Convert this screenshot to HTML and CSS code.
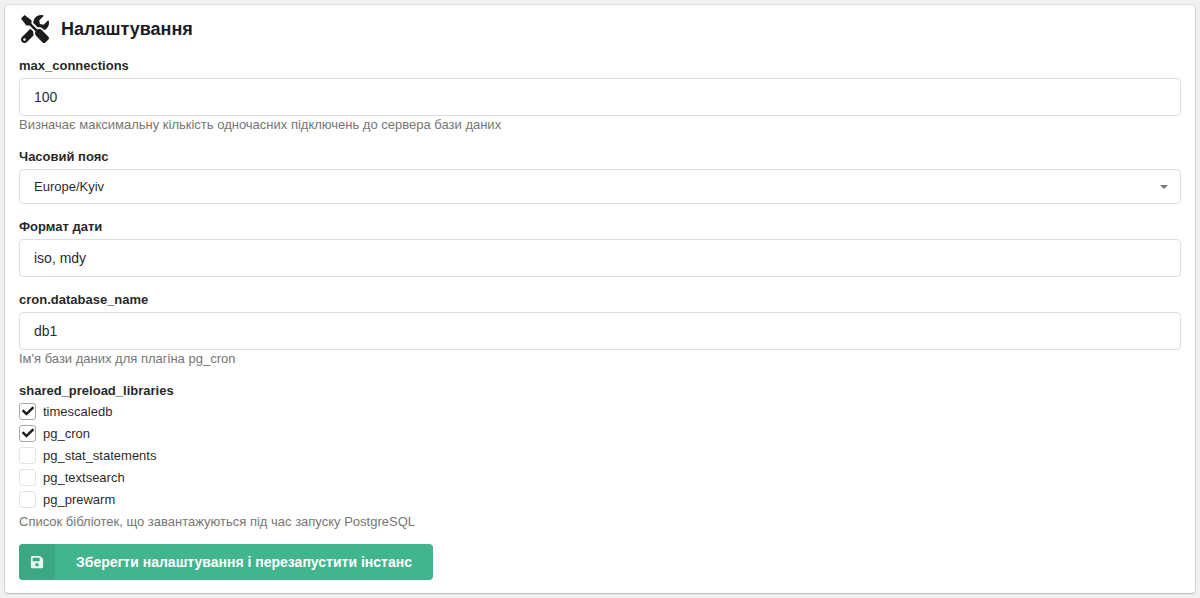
FILE: index.html
```html
<!DOCTYPE html>
<html lang="uk">
<head>
<meta charset="utf-8">
<title>Налаштування</title>
<link rel="stylesheet" href="styles.css">
</head>
<body>
<main class="card">
  <h2 class="title">
    <svg class="title-icon" viewBox="0 0 512 512" aria-hidden="true"><path d="M501.1 395.7 384 278.6c-23.1-23.1-57.6-27.6-85.4-13.9L192 158.1V96L64 0 0 64l96 128h62.1l106.6 106.6c-13.6 27.8-9.2 62.3 13.9 85.4l117.1 117.1c14.6 14.6 38.2 14.6 52.7 0l52.7-52.7c14.5-14.6 14.5-38.2 0-52.7zM331.7 225c28.3 0 54.9 11 74.9 31l19.4 19.4c15.8-6.9 30.8-16.5 43.8-29.5 37.1-37.1 49.7-89.3 37.9-136.7-2.2-9-13.5-12.1-20.1-5.5l-74.4 74.4-67.9-11.3L334 98.9l74.4-74.4c6.6-6.6 3.4-17.9-5.7-20.2-47.4-11.7-99.6.9-136.6 37.9-28.5 28.5-41.9 66.1-41.2 103.6l82.1 82.1c8.1-1.9 16.5-2.9 24.7-2.9zm-103.9 82-56.7-56.7L18.7 402.8c-25 25-25 65.5 0 90.5s65.5 25 90.5 0l123.6-123.6c-7.6-19.9-9.9-41.6-5-62.7zM64 472c-13.2 0-24-10.8-24-24 0-13.3 10.7-24 24-24s24 10.7 24 24c0 13.2-10.7 24-24 24z"/></svg>
    <span>Налаштування</span>
  </h2>

  <div class="field">
    <label class="label">max_connections</label>
    <div class="input">100</div>
    <div class="help">Визначає максимальну кількість одночасних підключень до сервера бази даних</div>
  </div>

  <div class="field">
    <label class="label">Часовий пояс</label>
    <div class="input select"><span>Europe/Kyiv</span><i class="caret"></i></div>
  </div>

  <div class="field">
    <label class="label">Формат дати</label>
    <div class="input">iso, mdy</div>
  </div>

  <div class="field">
    <label class="label">cron.database_name</label>
    <div class="input">db1</div>
    <div class="help">Ім'я бази даних для плагіна pg_cron</div>
  </div>

  <div class="field field-last">
    <label class="label label-tight">shared_preload_libraries</label>
    <div class="checks">
      <div class="check"><span class="box is-on"><svg viewBox="0 0 512 512" aria-hidden="true"><path d="M173.9 439.4 7.5 273c-10-10-10-26.2 0-36.2l36.2-36.2c10-10 26.2-10 36.2 0L192 312.7 432.1 72.6c10-10 26.2-10 36.2 0l36.2 36.2c10 10 10 26.2 0 36.2L210.1 439.4c-10 10-26.2 10-36.2 0z"/></svg></span>timescaledb</div>
      <div class="check"><span class="box is-on"><svg viewBox="0 0 512 512" aria-hidden="true"><path d="M173.9 439.4 7.5 273c-10-10-10-26.2 0-36.2l36.2-36.2c10-10 26.2-10 36.2 0L192 312.7 432.1 72.6c10-10 26.2-10 36.2 0l36.2 36.2c10 10 10 26.2 0 36.2L210.1 439.4c-10 10-26.2 10-36.2 0z"/></svg></span>pg_cron</div>
      <div class="check"><span class="box"></span>pg_stat_statements</div>
      <div class="check"><span class="box"></span>pg_textsearch</div>
      <div class="check"><span class="box"></span>pg_prewarm</div>
    </div>
    <div class="help">Список бібліотек, що завантажуються під час запуску PostgreSQL</div>
  </div>

  <button class="save" type="button">
    <span class="save-icon"><svg viewBox="0 0 448 512" aria-hidden="true"><path d="M433.941 129.941l-83.882-83.882A48 48 0 0 0 316.118 32H48C21.49 32 0 53.49 0 80v352c0 26.51 21.49 48 48 48h352c26.51 0 48-21.49 48-48V163.882a48 48 0 0 0-14.059-33.941zM224 416c-35.346 0-64-28.654-64-64 0-35.346 28.654-64 64-64s64 28.654 64 64c0 35.346-28.654 64-64 64zm96-304.52V212c0 6.627-5.373 12-12 12H76c-6.627 0-12-5.373-12-12V108c0-6.627 5.373-12 12-12h228.52c3.183 0 6.235 1.264 8.485 3.515l3.48 3.48A11.996 11.996 0 0 1 320 111.48z"/></svg></span>
    <span class="save-text">Зберегти налаштування і перезапустити інстанс</span>
  </button>
</main>
</body>
</html>
```
FILE: styles.css
```css
* { box-sizing: border-box; }
html, body { height: 100%; }
body {
  margin: 0;
  padding: 5px;
  background: #eff1f3;
  color: rgba(0, 0, 0, .87);
  font: 14px/1 "Liberation Sans", Arial, sans-serif;
  overflow: hidden;
}
.card {
  height: 588px;
  padding: 9px 14px 13px;
  background: #fff;
  border-radius: 4px;
  box-shadow: 0 1px 2px rgba(34, 36, 38, .2), 0 0 0 1px rgba(34, 36, 38, .08);
}
.title {
  display: flex;
  align-items: center;
  gap: 12px;
  height: 30px;
  margin: 0 0 14px 2px;
  font-size: 18px;
  font-weight: 700;
  color: #1b1c1d;
}
.title-icon { width: 28px; height: 28px; fill: #1b1c1d; }
.field { margin-bottom: 15px; }
.field-last { margin-bottom: 13px; }
.label {
  display: block;
  height: 16px;
  margin-bottom: 4px;
  font-size: 13px;
  line-height: 16px;
  font-weight: 700;
  color: rgba(0, 0, 0, .87);
}
.label-tight { margin-bottom: 1px; }
.input {
  display: flex;
  align-items: center;
  height: 38px;
  padding: 0 14px;
  border: 1px solid #dededf;
  border-radius: 4px;
  background: #fff;
  font-size: 14px;
}
.select {
  justify-content: space-between;
  height: 35px;
  font-size: 13px;
}
.caret {
  margin-right: -2px;
  border-style: solid;
  border-width: 4px 4px 0;
  border-color: #77787a transparent transparent;
}
.help {
  height: 17px;
  margin-top: 1px;
  font-size: 13px;
  line-height: 16px;
  color: #767676;
}
.checks { display: flex; flex-direction: column; margin-bottom: 4px; }
.check {
  display: flex;
  align-items: center;
  gap: 7px;
  height: 22px;
  font-size: 13px;
}
.box {
  display: flex;
  align-items: center;
  justify-content: center;
  width: 17px;
  height: 17px;
  border: 1px solid #e4e4e5;
  border-radius: 3px;
  background: #fff;
}
.box.is-on { border-color: #a9a9aa; }
.box svg { width: 12px; height: 12px; fill: #1b1c1d; }
.save {
  display: flex;
  align-items: stretch;
  width: 414px;
  height: 36px;
  padding: 0;
  border: 0;
  border-radius: 4px;
  overflow: hidden;
  background: #41b58e;
  color: #fff;
  font: 700 14px "Liberation Sans", Arial, sans-serif;
}
.save-icon {
  display: flex;
  align-items: center;
  justify-content: center;
  width: 36px;
  background: #3ba883;
}
.save-icon svg { width: 14px; height: 14px; fill: #e8f6f1; }
.save-text { align-self: center; margin-left: 21px; }
```
